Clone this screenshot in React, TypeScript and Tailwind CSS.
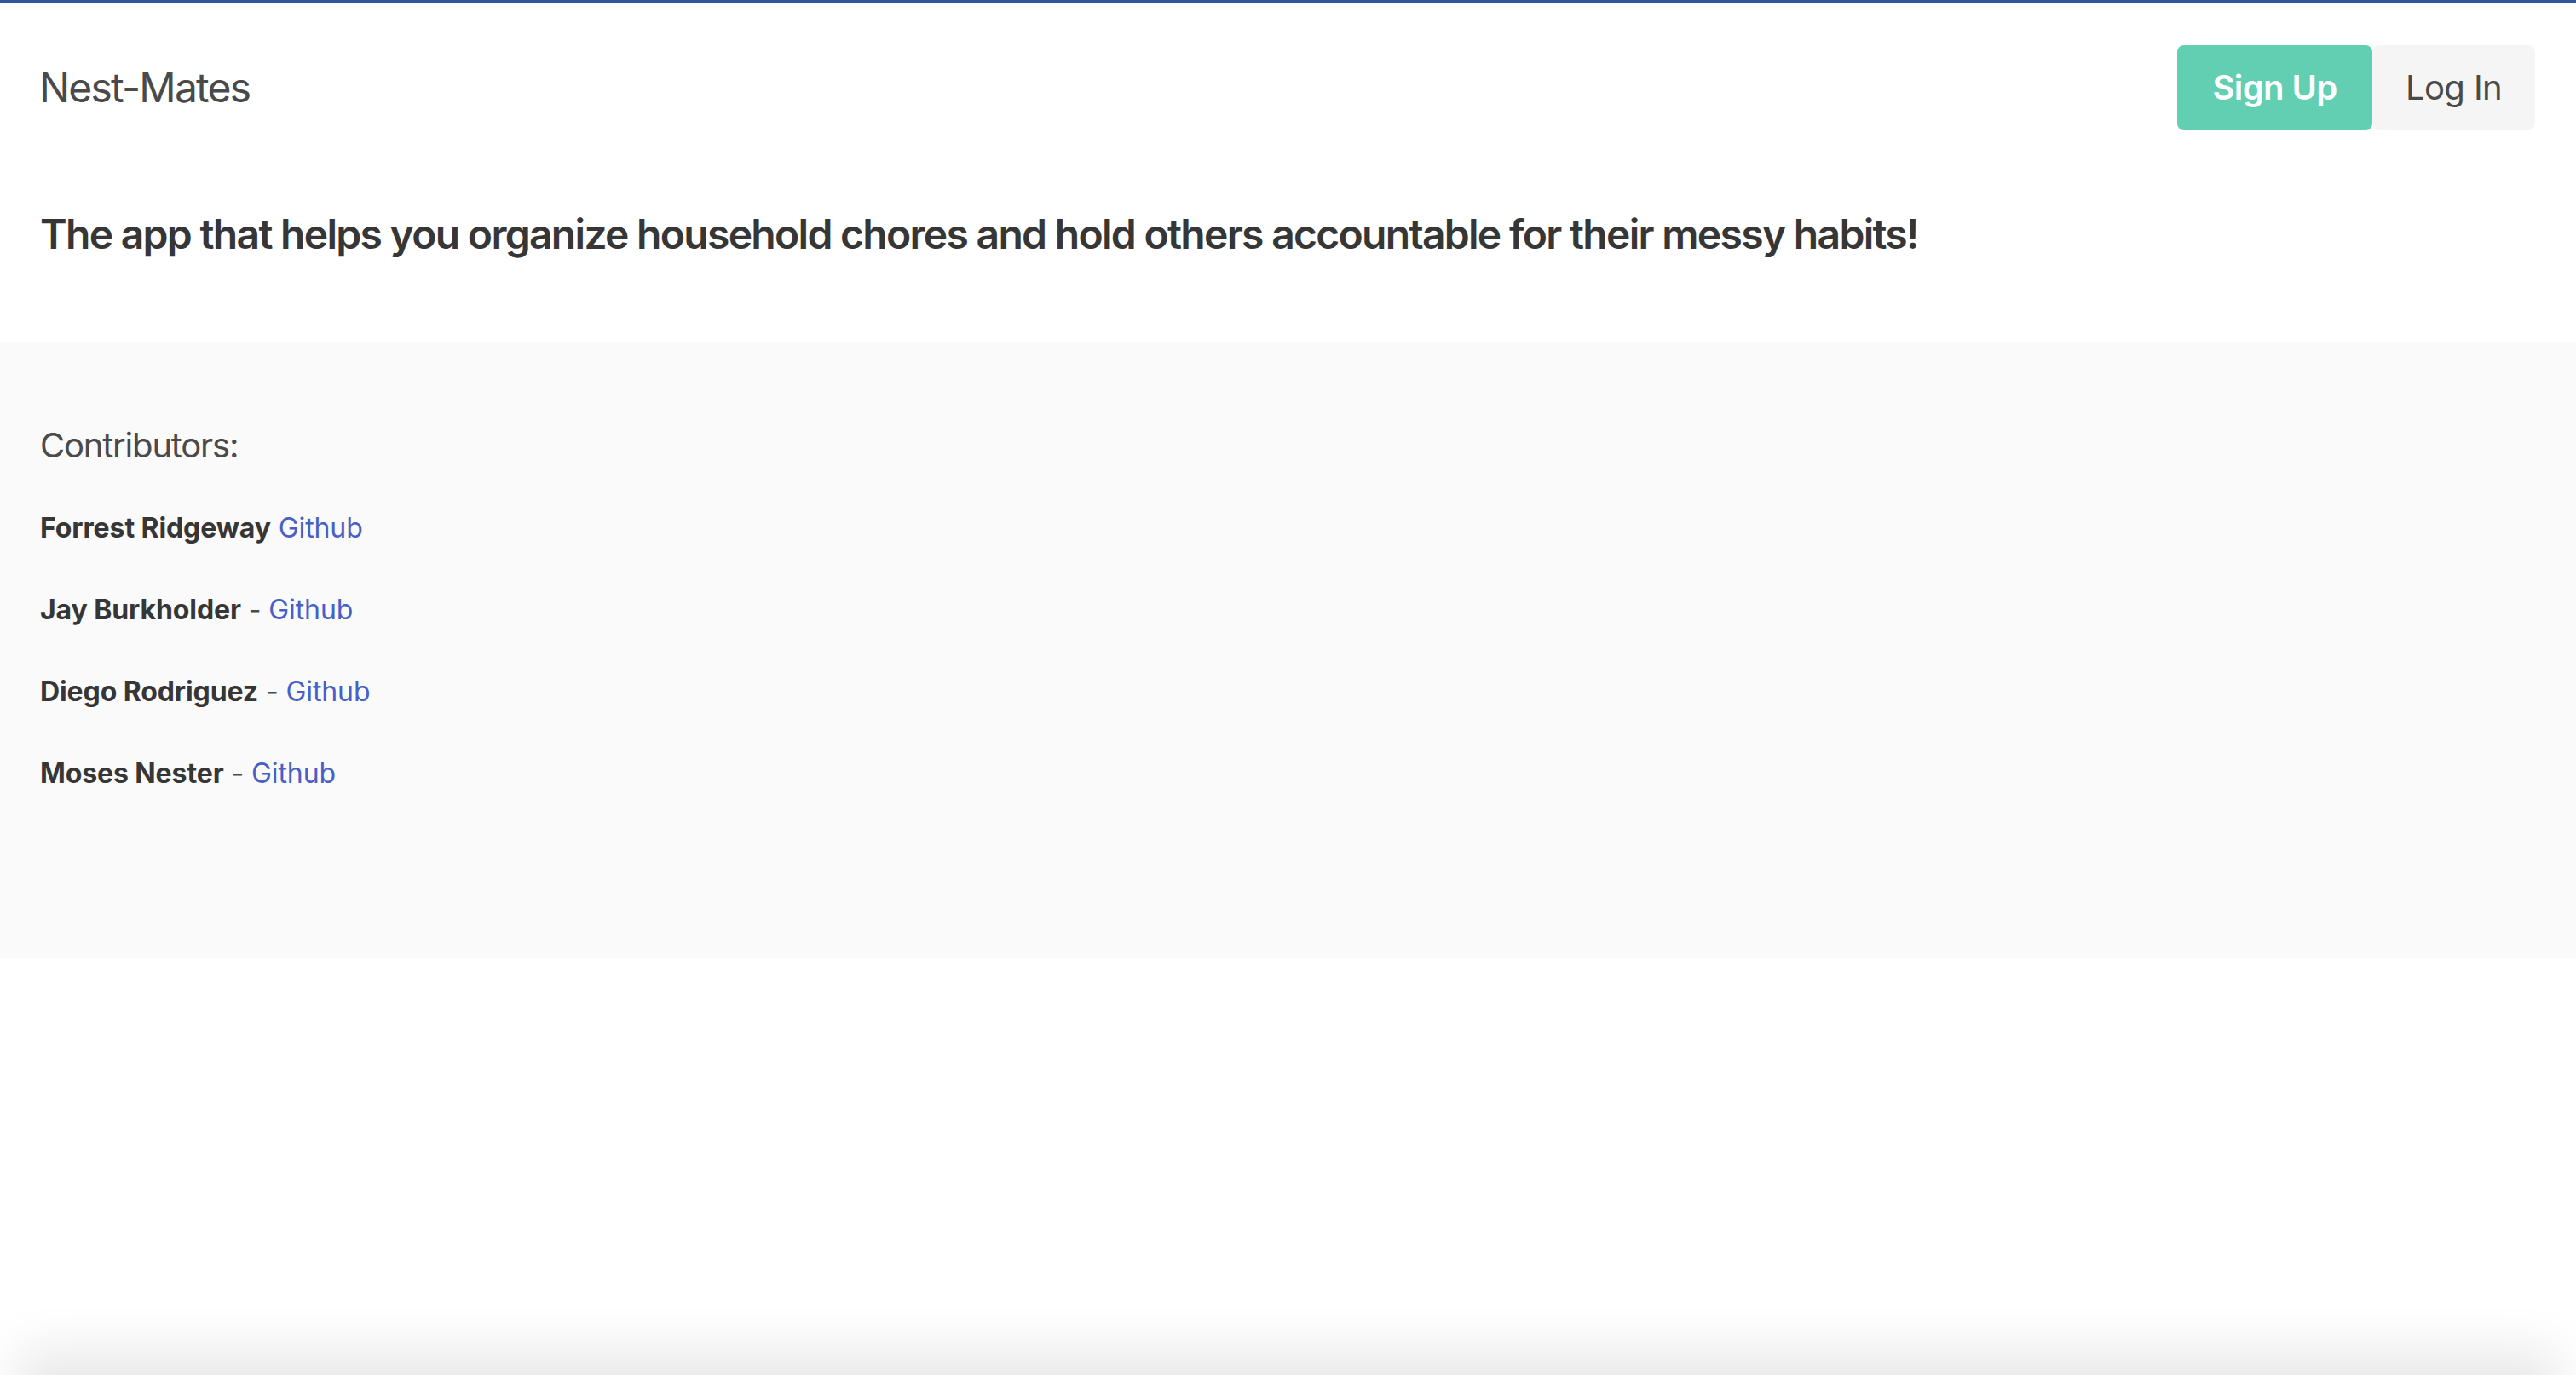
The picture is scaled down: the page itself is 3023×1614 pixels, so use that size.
import React from "react";

const contributors = [
  { name: "Forrest Ridgeway", dash: false },
  { name: "Jay Burkholder", dash: true },
  { name: "Diego Rodriguez", dash: true },
  { name: "Moses Nester", dash: true },
];

export default function App() {
  return (
    <div className="relative min-h-screen overflow-hidden bg-white font-['Inter','Noto_Sans',sans-serif] text-[#4a4a4a]">
      {/* top accent line */}
      <div className="h-[3px] bg-[#2f5597]" />
      <div className="h-[1px] bg-[#7d97c8]" />

      {/* navbar */}
      <header className="flex h-[197px] items-center justify-between pl-[46px] pr-[48px]">
        <div className="text-[48px] leading-[54px] text-[#4a4a4a] tracking-[-1.8px]">Nest-Mates</div>
        <div className="flex">
          <button className="flex h-[100px] w-[229px] items-center justify-center rounded-[8px] bg-[#62cfb3] text-[40px] font-semibold text-white tracking-[-0.6px]">
            Sign Up
          </button>
          <button className="flex h-[100px] w-[191px] items-center justify-center rounded-[8px] bg-[#f5f5f5] text-[40px] text-[#4a4a4a] tracking-[-0.6px]">
            Log In
          </button>
        </div>
      </header>

      {/* tagline */}
      <section className="pl-[47px] pt-[47px] pb-[99px]">
        <h1 className="text-[48px] leading-[54px] font-semibold text-[#363636] tracking-[-1.7px]">
          The app that helps you organize household chores and hold others accountable for their messy habits!
        </h1>
      </section>

      {/* contributors */}
      <section className="bg-[#fafafa] pl-[47px] pt-[99px] pb-[192px]">
        <h2 className="text-[40px] leading-[45px] text-[#4a4a4a] tracking-[-1.2px]">Contributors:</h2>
        <ul className="mt-[51px] flex flex-col gap-[48px]">
          {contributors.map((c) => (
            <li key={c.name} className="text-[32px] leading-[48px] tracking-[-0.1px]">
              <span className="font-bold text-[#363636]">{c.name}</span>
              {c.dash ? " - " : " "}
              <a href="#" className="text-[#485fc7]">
                Github
              </a>
            </li>
          ))}
        </ul>
      </section>

      {/* window bottom shadow */}
      <div className="pointer-events-none absolute bottom-[-40px] left-[50px] right-[50px] h-[40px] shadow-[0_0_60px_30px_rgba(0,0,0,0.09)]" />
    </div>
  );
}
